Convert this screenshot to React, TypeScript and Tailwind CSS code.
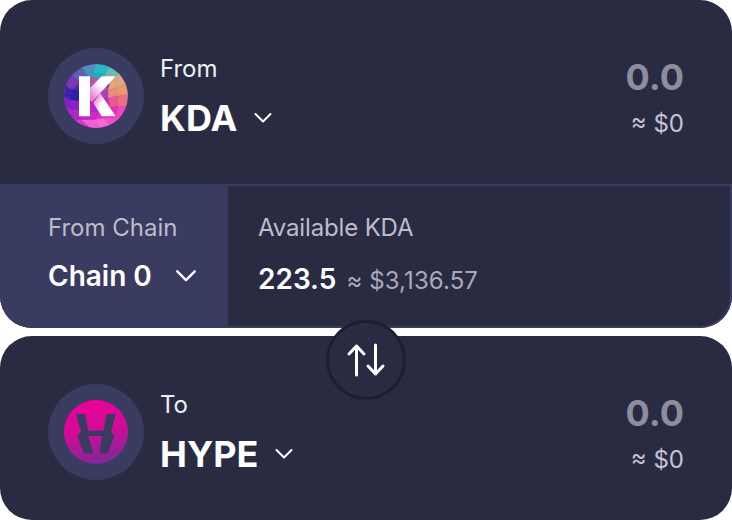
const font = { fontFamily: 'Inter, sans-serif' }

function Chevron({ className }: { className: string }) {
  return (
    <svg className={className} viewBox="0 0 24 24" fill="none" stroke="currentColor" strokeWidth="2" strokeLinecap="round" strokeLinejoin="round">
      <path d="M4.500 8l7.500 7.500L19.500 8" />
    </svg>
  )
}

const facets: [string, string][] = [
  ['0,0 64,0 64,64 0,64', '#8a2bc4'],
  ['8,12 18,3 24,12 16,18', '#5a63b4'],
  ['18,3 32,0 30,9 24,12', '#4a93b8'],
  ['32,0 46,2 42,10 30,9', '#22bcc6'],
  ['30,9 42,10 38,16 24,12', '#2aa9b8'],
  ['46,2 56,10 50,14 42,10', '#6fbab0'],
  ['42,10 50,14 46,20 38,16', '#a8a890'],
  ['56,10 62,20 52,24 50,14', '#d8a880'],
  ['50,14 52,24 44,26 46,20', '#eda56c'],
  ['62,20 64,30 54,32 52,24', '#e89a6a'],
  ['52,24 54,32 44,34 44,26', '#e88e7a'],
  ['64,30 63,42 54,42 54,32', '#e8727e'],
  ['54,32 54,42 46,44 44,34', '#e65a8e'],
  ['8,12 16,18 8,26 2,22', '#7a38b4'],
  ['16,18 24,12 26,26 8,26', '#4a2cb0'],
  ['24,12 38,16 44,26 26,26', '#b05a9e'],
  ['2,22 8,26 6,36 0,32', '#3f22a8'],
  ['8,26 26,26 20,38 6,36', '#2f1ea6'],
  ['26,26 44,26 44,34 20,38', '#b040b0'],
  ['0,32 6,36 10,46 2,44', '#7a24c0'],
  ['6,36 20,38 22,48 10,46', '#8e22c6'],
  ['20,38 44,34 34,48 22,48', '#b426c6'],
  ['44,34 46,44 34,48', '#cf2cc0'],
  ['46,44 54,42 52,54 40,54', '#e232be'],
  ['54,42 63,42 58,52 52,54', '#e84ab8'],
  ['34,48 46,44 40,54 30,56', '#d82cc4'],
  ['2,44 10,46 18,56 10,56', '#a828c8'],
  ['10,46 22,48 30,56 18,56', '#bc2ac8'],
  ['22,48 34,48 30,56', '#c82cc6'],
  ['10,56 18,56 26,64 14,64', '#d23ac8'],
  ['18,56 30,56 36,64 26,64', '#f060d4'],
  ['30,56 40,54 48,64 36,64', '#f46ad0'],
  ['40,54 52,54 58,52 50,64 48,64', '#ee50c8'],
]

function KdaLogo() {
  return (
    <svg className="w-16 h-16" viewBox="0 0 64 64">
      <defs>
        <clipPath id="kda-clip"><circle cx="32" cy="32" r="32" /></clipPath>
        <linearGradient id="kda-arm" x1="0" y1="1" x2="1" y2="0">
          <stop offset="0.1" stopColor="#e87ad0" />
          <stop offset="0.55" stopColor="#ffffff" />
        </linearGradient>
        <linearGradient id="kda-leg" x1="0" y1="0" x2="1" y2="0.6">
          <stop offset="0.05" stopColor="#e060c8" />
          <stop offset="0.5" stopColor="#ffffff" />
        </linearGradient>
      </defs>
      <g clipPath="url(#kda-clip)">
        {facets.map(([points, fill]) => (
          <polygon key={points} points={points} fill={fill} stroke={fill} strokeWidth="0.4" />
        ))}
      </g>
      <polygon points="36,29 51.700,52.300 37.700,52.300 29.300,39" fill="url(#kda-leg)" />
      <polygon points="37.700,12.300 51.700,12.300 28,38 26,36 26,24" fill="url(#kda-arm)" />
      <polygon points="15,12.300 26,12.300 26,52.300 15,52.300" fill="#ffffff" />
    </svg>
  )
}

function HypeLogo() {
  return (
    <svg className="w-16 h-16" viewBox="0 0 64 64">
      <defs>
        <linearGradient id="hype-bg" x1="0.4" y1="0" x2="0.6" y2="1">
          <stop offset="0" stopColor="#ee0099" />
          <stop offset="0.5" stopColor="#cf0c96" />
          <stop offset="1" stopColor="#7c2a96" />
        </linearGradient>
      </defs>
      <circle cx="32" cy="32" r="32" fill="url(#hype-bg)" />
      <polygon
        points="12,14 21,14 24.300,30.700 39.300,30.700 42.700,14 51.700,14 47,32 50.300,36 43.700,53.300 35.300,53.300 38.300,36 24.300,36 29.300,53.300 20,53.300 13.300,36 17,32"
        fill="#3a3b60"
      />
    </svg>
  )
}

function TokenRow({ label, symbol, logo }: { label: string; symbol: string; logo: React.ReactNode }) {
  return (
    <div className="h-[184px] shrink-0 flex items-center justify-between pl-12 pr-12 pt-2">
      <div className="flex items-center gap-4">
        <div className="w-24 h-24 rounded-full bg-[#3a3b60] flex items-center justify-center">{logo}</div>
        <div className="flex flex-col">
          <span className="text-[24px] leading-[32px] text-[#f0f0f4]">{label}</span>
          <div className="flex items-center gap-[14px] mt-[11px]">
            <span className="text-[36px] leading-[44px] font-bold text-white">{symbol}</span>
            <Chevron className="w-6 h-6 text-white" />
          </div>
        </div>
      </div>
      <div className="flex flex-col items-end pt-[3px]">
        <span className="text-[36px] leading-[44px] font-bold text-[#8d8d9c]">0.0</span>
        <span className="text-[24px] leading-[32px] text-[#c4c4cf] mt-[9px]">≈ $0</span>
      </div>
    </div>
  )
}

export default function App() {
  return (
    <div className="relative w-[732px] h-[520px] bg-white overflow-hidden" style={font}>
      <div className="h-[328px] rounded-[32px] bg-[#292b43] overflow-hidden flex flex-col">
        <TokenRow label="From" symbol="KDA" logo={<KdaLogo />} />
        <div className="h-[144px] flex bg-[#3a3b60]">
          <div className="w-[228px] shrink-0 pl-12 pt-[28px]">
            <div className="text-[24px] leading-[32px] text-[#bdbdca]">From Chain</div>
            <div className="flex items-center gap-[20px] mt-[14px]">
              <span className="text-[28px] leading-[36px] font-semibold text-white">Chain 0</span>
              <Chevron className="w-[28px] h-[28px] text-white" />
            </div>
          </div>
          <div className="flex-1 bg-[#292b43] mt-[2px] mr-[2px] mb-[2px] rounded-br-[30px] pl-[30px] pt-[26px]">
            <div className="text-[24px] leading-[32px] text-[#bdbdca] tracking-[-0.15px]">Available KDA</div>
            <div className="flex items-baseline gap-[10px] mt-[17px]">
              <span className="text-[28px] leading-[36px] font-semibold text-white">223.5</span>
              <span className="text-[24px] leading-[32px] text-[#a9a9b8] tracking-[0.1px]">≈ $3,136.57</span>
            </div>
          </div>
        </div>
      </div>
      <div className="mt-2 h-[184px] rounded-[32px] bg-[#292b43] overflow-hidden">
        <TokenRow label="To" symbol="HYPE" logo={<HypeLogo />} />
      </div>
      <div className="absolute left-[326px] top-[320px] w-20 h-20 rounded-full bg-[#292b43] border-[3px] border-[#1d1e30] flex items-center justify-center">
        <svg className="w-12 h-12 text-white" viewBox="0 0 48 48" fill="none" stroke="currentColor" strokeWidth="3" strokeLinecap="round" strokeLinejoin="round">
          <path d="M14.500 39V10M7 18l7.500-8 7.500 8" />
          <path d="M33.500 9v29M26 30l7.500 8 7.500-8" />
        </svg>
      </div>
    </div>
  )
}
